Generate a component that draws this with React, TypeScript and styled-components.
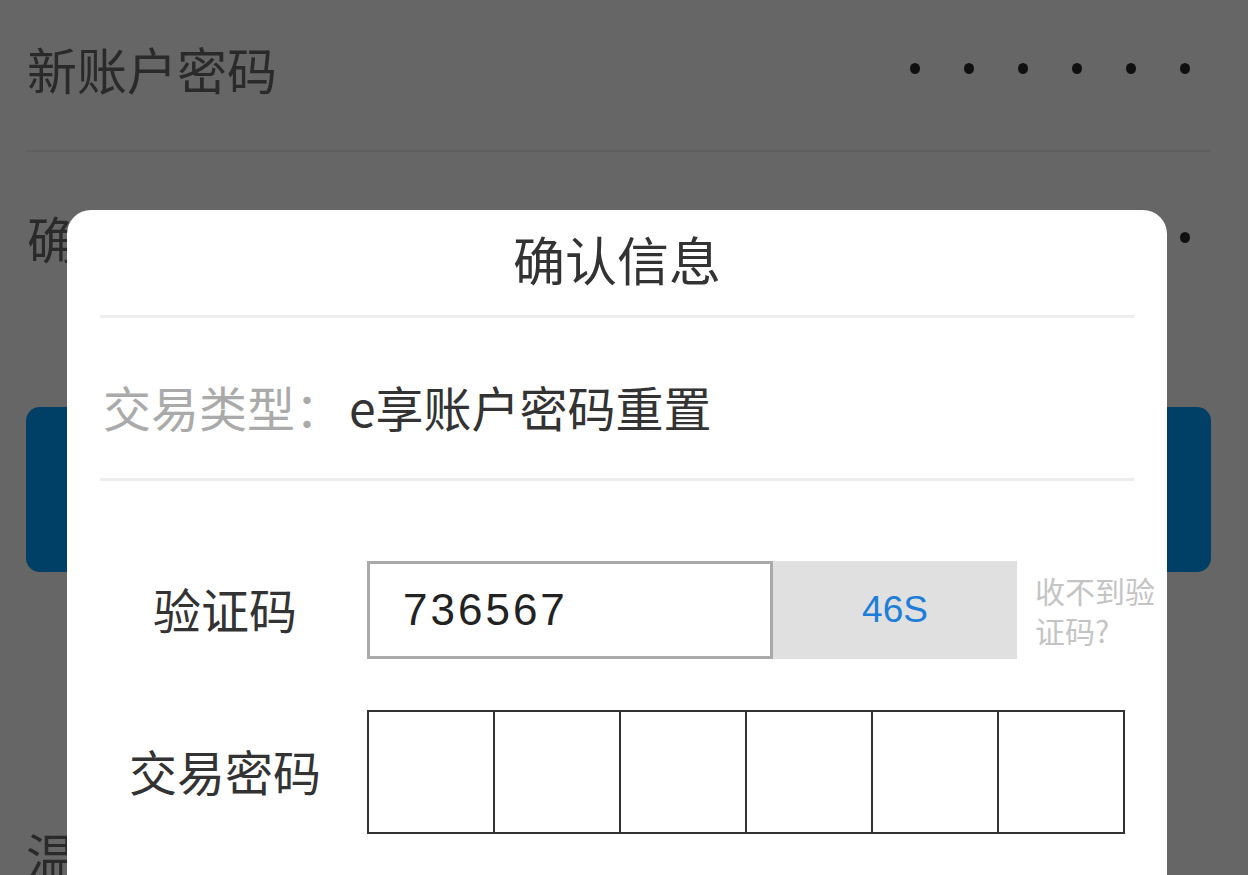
import styled, { createGlobalStyle } from "styled-components";

const GlobalStyle = createGlobalStyle`
  html, body {
    margin: 0;
    padding: 0;
    overflow: hidden;
    background: #666666;
  }
  * {
    box-sizing: border-box;
  }
`;

const cjk = `"Noto Sans CJK SC", "Noto Sans", sans-serif`;

const Page = styled.div`
  width: 1248px;
  height: 875px;
  background: #666666;
  padding: 0 37px 0 26px;
  font-family: ${cjk};
  color: #2a2a2a;
  overflow: hidden;
`;

const FieldRow = styled.div<{ $height: number; $divider?: boolean }>`
  display: flex;
  align-items: center;
  justify-content: space-between;
  height: ${({ $height }) => $height}px;
  padding-bottom: ${({ $divider }) => ($divider ? 14 : 0)}px;
  border-bottom: ${({ $divider }) => ($divider ? "2px solid #5f5f5f" : "none")};
`;

const FieldLabel = styled.span`
  font-size: 50px;
  line-height: 1;
  padding-left: 1px;
`;

const Dots = styled.div`
  display: flex;
  gap: 44px;
  padding-right: 21px;
`;

const Dot = styled.span`
  width: 10px;
  height: 11px;
  border-radius: 50%;
  background: #101010;
`;

const SubmitButton = styled.div`
  margin-top: 85px;
  height: 165px;
  border-radius: 14px;
  background: #003f66;
`;

const Tip = styled.div`
  margin-top: 257px;
  font-size: 50px;
  line-height: 1;
`;

const Mask = styled.div`
  position: fixed;
  inset: 0;
  padding: 210px 0 0 67px;
`;

const Dialog = styled.div`
  width: 1100px;
  height: 760px;
  background: #ffffff;
  border-radius: 24px;
  padding: 0 33px;
  font-family: ${cjk};
`;

const DialogTitle = styled.div`
  height: 108px;
  display: flex;
  align-items: center;
  justify-content: center;
  font-size: 52px;
  color: #333333;
  border-bottom: 3px solid #eeeeee;
  padding-bottom: 8px;
`;

const TypeRow = styled.div`
  height: 163px;
  display: flex;
  align-items: center;
  padding: 16px 0 0 3px;
  font-size: 48px;
  border-bottom: 3px solid #eeeeee;
`;

const TypeLabel = styled.span`
  color: #aaaaaa;
`;

const TypeValue = styled.span`
  color: #333333;
  margin-left: 6px;
`;

const FormRow = styled.div<{ $top: number; $height: number }>`
  display: flex;
  align-items: center;
  margin-top: ${({ $top }) => $top}px;
  height: ${({ $height }) => $height}px;
`;

const RowLabel = styled.div`
  width: 250px;
  flex-shrink: 0;
  text-align: center;
  font-size: 48px;
  color: #333333;
  margin-right: 17px;
  padding-bottom: 4px;
`;

const CodeInput = styled.div`
  width: 406px;
  height: 98px;
  flex-shrink: 0;
  border: 3px solid #aaaaaa;
  display: flex;
  align-items: center;
  padding-left: 33px;
  font-family: "Liberation Sans", Arial, sans-serif;
  font-size: 44px;
  letter-spacing: 3px;
  color: #222222;
`;

const CountDown = styled.div`
  width: 244px;
  height: 98px;
  flex-shrink: 0;
  background: #e0e0e0;
  display: flex;
  align-items: center;
  justify-content: center;
  font-family: "Liberation Sans", Arial, sans-serif;
  font-size: 37px;
  color: #1c7ed6;
`;

const Resend = styled.div`
  margin-left: 18px;
  width: 124px;
  flex-shrink: 0;
  font-size: 30px;
  line-height: 40px;
  color: #c4c4c4;
`;

const PinBoxes = styled.div`
  display: flex;
  width: 758px;
  height: 124px;
  flex-shrink: 0;
  border: 2px solid #333333;
`;

const PinCell = styled.div`
  flex: 1;
  & + & {
    border-left: 2px solid #333333;
  }
`;

export default function App() {
  return (
    <>
      <GlobalStyle />
      <Page>
        <FieldRow $height={152} $divider>
          <FieldLabel>新账户密码</FieldLabel>
          <Dots>
            {[0, 1, 2, 3, 4, 5].map((i) => (
              <Dot key={i} />
            ))}
          </Dots>
        </FieldRow>
        <FieldRow $height={170}>
          <FieldLabel>确认新账户密码</FieldLabel>
          <Dots>
            {[0, 1, 2, 3, 4, 5].map((i) => (
              <Dot key={i} />
            ))}
          </Dots>
        </FieldRow>
        <SubmitButton />
        <Tip>温馨提示</Tip>
      </Page>
      <Mask>
        <Dialog>
          <DialogTitle>确认信息</DialogTitle>
          <TypeRow>
            <TypeLabel>交易类型：</TypeLabel>
            <TypeValue>e享账户密码重置</TypeValue>
          </TypeRow>
          <FormRow $top={80} $height={98}>
            <RowLabel>验证码</RowLabel>
            <CodeInput>736567</CodeInput>
            <CountDown>46S</CountDown>
            <Resend>收不到验证码?</Resend>
          </FormRow>
          <FormRow $top={51} $height={124}>
            <RowLabel>交易密码</RowLabel>
            <PinBoxes>
              {[0, 1, 2, 3, 4, 5].map((i) => (
                <PinCell key={i} />
              ))}
            </PinBoxes>
          </FormRow>
        </Dialog>
      </Mask>
    </>
  );
}
